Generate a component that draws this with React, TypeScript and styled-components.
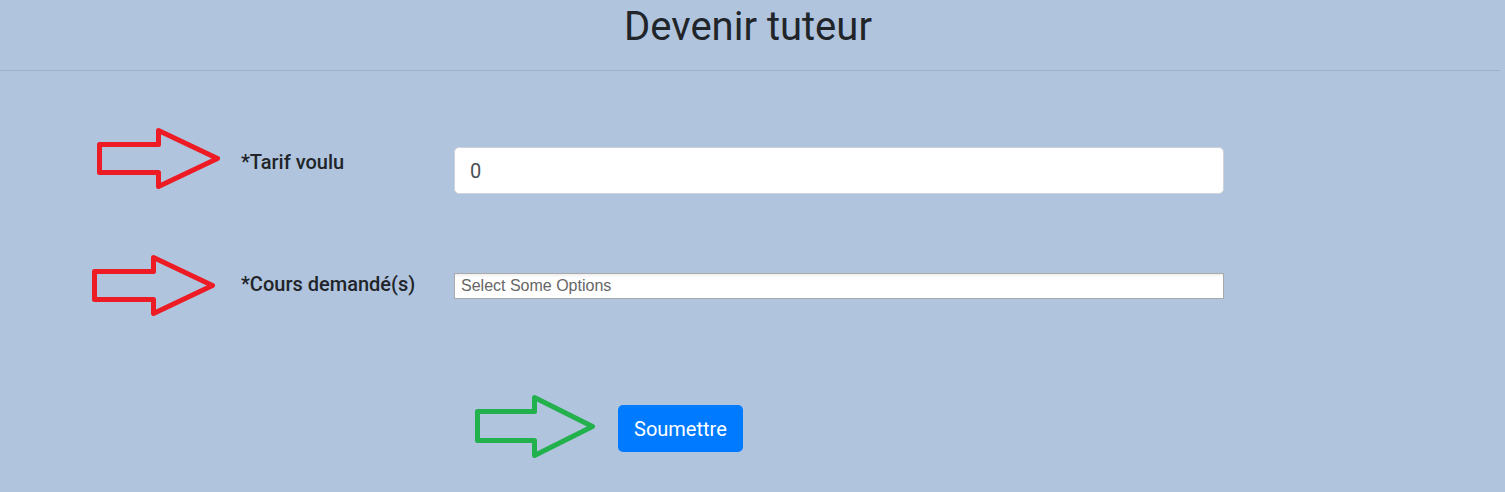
import React from "react";
import styled, { createGlobalStyle } from "styled-components";

const GlobalStyle = createGlobalStyle`
  *, *::before, *::after { box-sizing: border-box; }
  body {
    margin: 0;
    background: #b0c4de;
    color: #212529;
    font-family: Roboto, "Liberation Sans", sans-serif;
    font-size: 20px;
    line-height: 30px;
  }
`;

const Page = styled.main`
  padding: 3px 5px 32px 0;
`;

const Title = styled.h1`
  margin: 0;
  padding-right: 4px;
  font-size: 40px;
  line-height: 48px;
  font-weight: 400;
  text-align: center;
`;

const Divider = styled.hr`
  margin: 19px 0 57px;
  border: 0;
  border-top: 1px solid rgba(0, 0, 0, 0.1);
`;

const Form = styled.form`
  display: flex;
  flex-direction: column;
`;

const Row = styled.div<{ $gap: number }>`
  display: grid;
  grid-template-columns: 241px 213px minmax(0, 1fr);
  align-items: start;
  padding-right: 276px;
  margin-bottom: ${({ $gap }) => $gap}px;
`;

const ArrowCell = styled.div<{ $inset: number }>`
  display: flex;
  justify-content: flex-end;
  padding-right: ${({ $inset }) => $inset}px;
`;

const Label = styled.label<{ $top: number }>`
  padding-top: ${({ $top }) => $top}px;
  font-weight: 500;
  white-space: nowrap;
`;

const Control = styled.div<{ $top: number }>`
  padding-top: ${({ $top }) => $top}px;
  display: flex;
`;

const RateInput = styled.input`
  width: 100%;
  height: 47px;
  padding: 8px 15px;
  border: 1px solid #ced4da;
  border-radius: 5px;
  background: #fff;
  color: #495057;
  font: inherit;
`;

const CourseInput = styled.input`
  width: 100%;
  height: 26px;
  padding: 0 6px;
  border: 1px solid #aaa;
  border-radius: 0;
  background: linear-gradient(#eee 1%, #fff 15%);
  font-family: "Liberation Sans", Arial, sans-serif;
  font-size: 16px;
  &::placeholder {
    color: #666;
    opacity: 1;
  }
`;

const Actions = styled.div`
  display: flex;
  align-items: flex-start;
  gap: 23px;
  padding-left: 475px;
`;

const SubmitButton = styled.button`
  margin-top: 10px;
  height: 47px;
  padding: 0 16px;
  border: 0;
  border-radius: 5px;
  background: #007bff;
  color: #fff;
  font: inherit;
`;

const ArrowSvg = styled.svg`
  display: block;
  flex: none;
  fill: none;
  stroke-width: 5;
  stroke-linejoin: round;
`;

function RedArrow() {
  return (
    <ArrowSvg width="123" height="61" viewBox="0 0 123 61" stroke="#ed1c24" aria-hidden="true">
      <path d="M2.5 16.5H61.5V2.5L120.5 30.5L61.5 58.5V44.5H2.5Z" />
    </ArrowSvg>
  );
}

function GreenArrow() {
  return (
    <ArrowSvg width="120" height="63" viewBox="0 0 120 63" stroke="#22b14c" aria-hidden="true">
      <path d="M2.5 16.5H59.5V2.5L117.5 31.5L59.5 60.5V45.5H2.5Z" />
    </ArrowSvg>
  );
}

export default function App() {
  return (
    <>
      <GlobalStyle />
      <Page>
        <Title>Devenir tuteur</Title>
        <Divider />
        <Form onSubmit={(event) => event.preventDefault()}>
          <Row $gap={61}>
            <ArrowCell $inset={21}>
              <RedArrow />
            </ArrowCell>
            <Label htmlFor="rate" $top={19}>*Tarif voulu</Label>
            <Control $top={19}>
              <RateInput id="rate" type="number" defaultValue={0} />
            </Control>
          </Row>
          <Row $gap={79}>
            <ArrowCell $inset={26}>
              <RedArrow />
            </ArrowCell>
            <Label htmlFor="courses" $top={14}>*Cours demandé(s)</Label>
            <Control $top={18}>
              <CourseInput id="courses" type="text" placeholder="Select Some Options" />
            </Control>
          </Row>
          <Actions>
            <GreenArrow />
            <SubmitButton type="submit">Soumettre</SubmitButton>
          </Actions>
        </Form>
      </Page>
    </>
  );
}
